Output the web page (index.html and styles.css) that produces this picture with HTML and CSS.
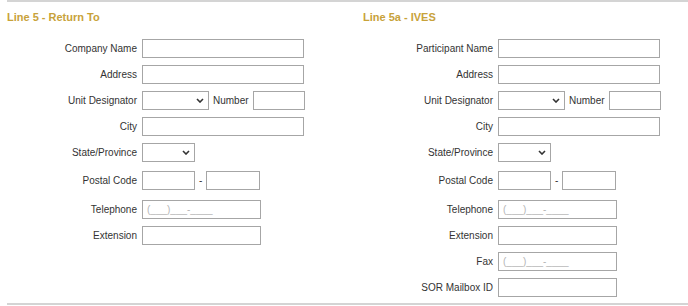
FILE: index.html
```html
<!DOCTYPE html>
<html lang="en">
<head>
  <meta charset="UTF-8" />
  <title>Return To / IVES</title>
  <link rel="stylesheet" href="styles.css">
</head>
<body>
  <div class="panel">
    <div class="col">
      <h3 class="title">Line 5 - Return To</h3>

      <div class="row"><label>Company Name</label><input class="w-full" type="text"></div>
      <div class="row"><label>Address</label><input class="w-full" type="text"></div>
      <div class="row">
        <label>Unit Designator</label>
        <span class="sel w-unit"><select></select><svg viewBox="0 0 8 5"><path d="M1 1 L4 4 L7 1"/></svg></span>
        <span class="inline-label">Number</span>
        <input class="w-num" type="text">
      </div>
      <div class="row"><label>City</label><input class="w-full" type="text"></div>
      <div class="row">
        <label>State/Province</label>
        <span class="sel w-state"><select></select><svg viewBox="0 0 8 5"><path d="M1 1 L4 4 L7 1"/></svg></span>
      </div>
      <div class="row gap-postal">
        <label>Postal Code</label>
        <input class="w-zip" type="text"><span class="dash">-</span><input class="w-zip4" type="text">
      </div>
      <div class="row gap-phone"><label>Telephone</label><input class="w-phone" type="text" placeholder="(___)___-____"></div>
      <div class="row"><label>Extension</label><input class="w-phone" type="text"></div>
    </div>

    <div class="col">
      <h3 class="title">Line 5a - IVES</h3>

      <div class="row"><label>Participant Name</label><input class="w-full" type="text"></div>
      <div class="row"><label>Address</label><input class="w-full" type="text"></div>
      <div class="row">
        <label>Unit Designator</label>
        <span class="sel w-unit"><select></select><svg viewBox="0 0 8 5"><path d="M1 1 L4 4 L7 1"/></svg></span>
        <span class="inline-label">Number</span>
        <input class="w-num" type="text">
      </div>
      <div class="row"><label>City</label><input class="w-full" type="text"></div>
      <div class="row">
        <label>State/Province</label>
        <span class="sel w-state"><select></select><svg viewBox="0 0 8 5"><path d="M1 1 L4 4 L7 1"/></svg></span>
      </div>
      <div class="row gap-postal">
        <label>Postal Code</label>
        <input class="w-zip" type="text"><span class="dash">-</span><input class="w-zip4" type="text">
      </div>
      <div class="row gap-phone"><label>Telephone</label><input class="w-phone" type="text" placeholder="(___)___-____"></div>
      <div class="row"><label>Extension</label><input class="w-phone" type="text"></div>
      <div class="row"><label>Fax</label><input class="w-phone" type="text" placeholder="(___)___-____"></div>
      <div class="row"><label>SOR Mailbox ID</label><input class="w-phone" type="text"></div>
    </div>
  </div>
</body>
</html>
```

FILE: styles.css
```css
* { box-sizing: border-box; }

body {
  margin: 0;
  background: #fff;
  color: #333;
  font-family: "Liberation Sans", Arial, sans-serif;
  font-size: 10px;
}

.panel {
  margin-left: 7px;
  height: 305px;
  border-top: 2px solid #d4d4d4;
  border-bottom: 2px solid #d4d4d4;
  display: flex;
  padding-top: 9px;
}

.col { flex: none; width: 356px; }
.col + .col { flex: 1; width: auto; }

.title {
  margin: 0 0 15px;
  font-size: 11px;
  line-height: 13px;
  font-weight: bold;
  color: #c8a23a;
}

.row {
  display: flex;
  align-items: center;
  height: 19px;
  margin-bottom: 7px;
}
/* margins collapse with the row above, so these are the full gaps */
.row.gap-postal { margin-top: 9px; }
.row.gap-phone { margin-top: 10px; }

.row label {
  width: 135px;
  padding-right: 5px;
  text-align: right;
  flex: none;
}

input {
  flex: none;
  height: 19px;
  border: 1px solid #a6a6a6;
  border-radius: 0;
  padding: 0 4px;
  font: inherit;
  background: #fff;
  outline: none;
}
input::placeholder { color: #b5b5b5; }

.w-full  { width: 162px; }
.w-num   { width: 52px; }
.w-zip   { width: 53px; }
.w-zip4  { width: 54px; }
.w-phone { width: 119px; }

.inline-label { margin: 0 4px; }
.dash { margin: 0 4px; }

.sel {
  position: relative;
  flex: none;
  height: 19px;
  display: block;
}
.sel select {
  appearance: none;
  width: 100%;
  height: 19px;
  border: 1px solid #a6a6a6;
  border-radius: 0;
  background: #fff;
  margin: 0;
}
.sel svg {
  position: absolute;
  right: 5px;
  top: 7px;
  width: 8px;
  height: 5px;
  fill: none;
  stroke: #333;
  stroke-width: 1.6;
}
.w-unit  { width: 67px; }
.w-state { width: 53px; }
```
